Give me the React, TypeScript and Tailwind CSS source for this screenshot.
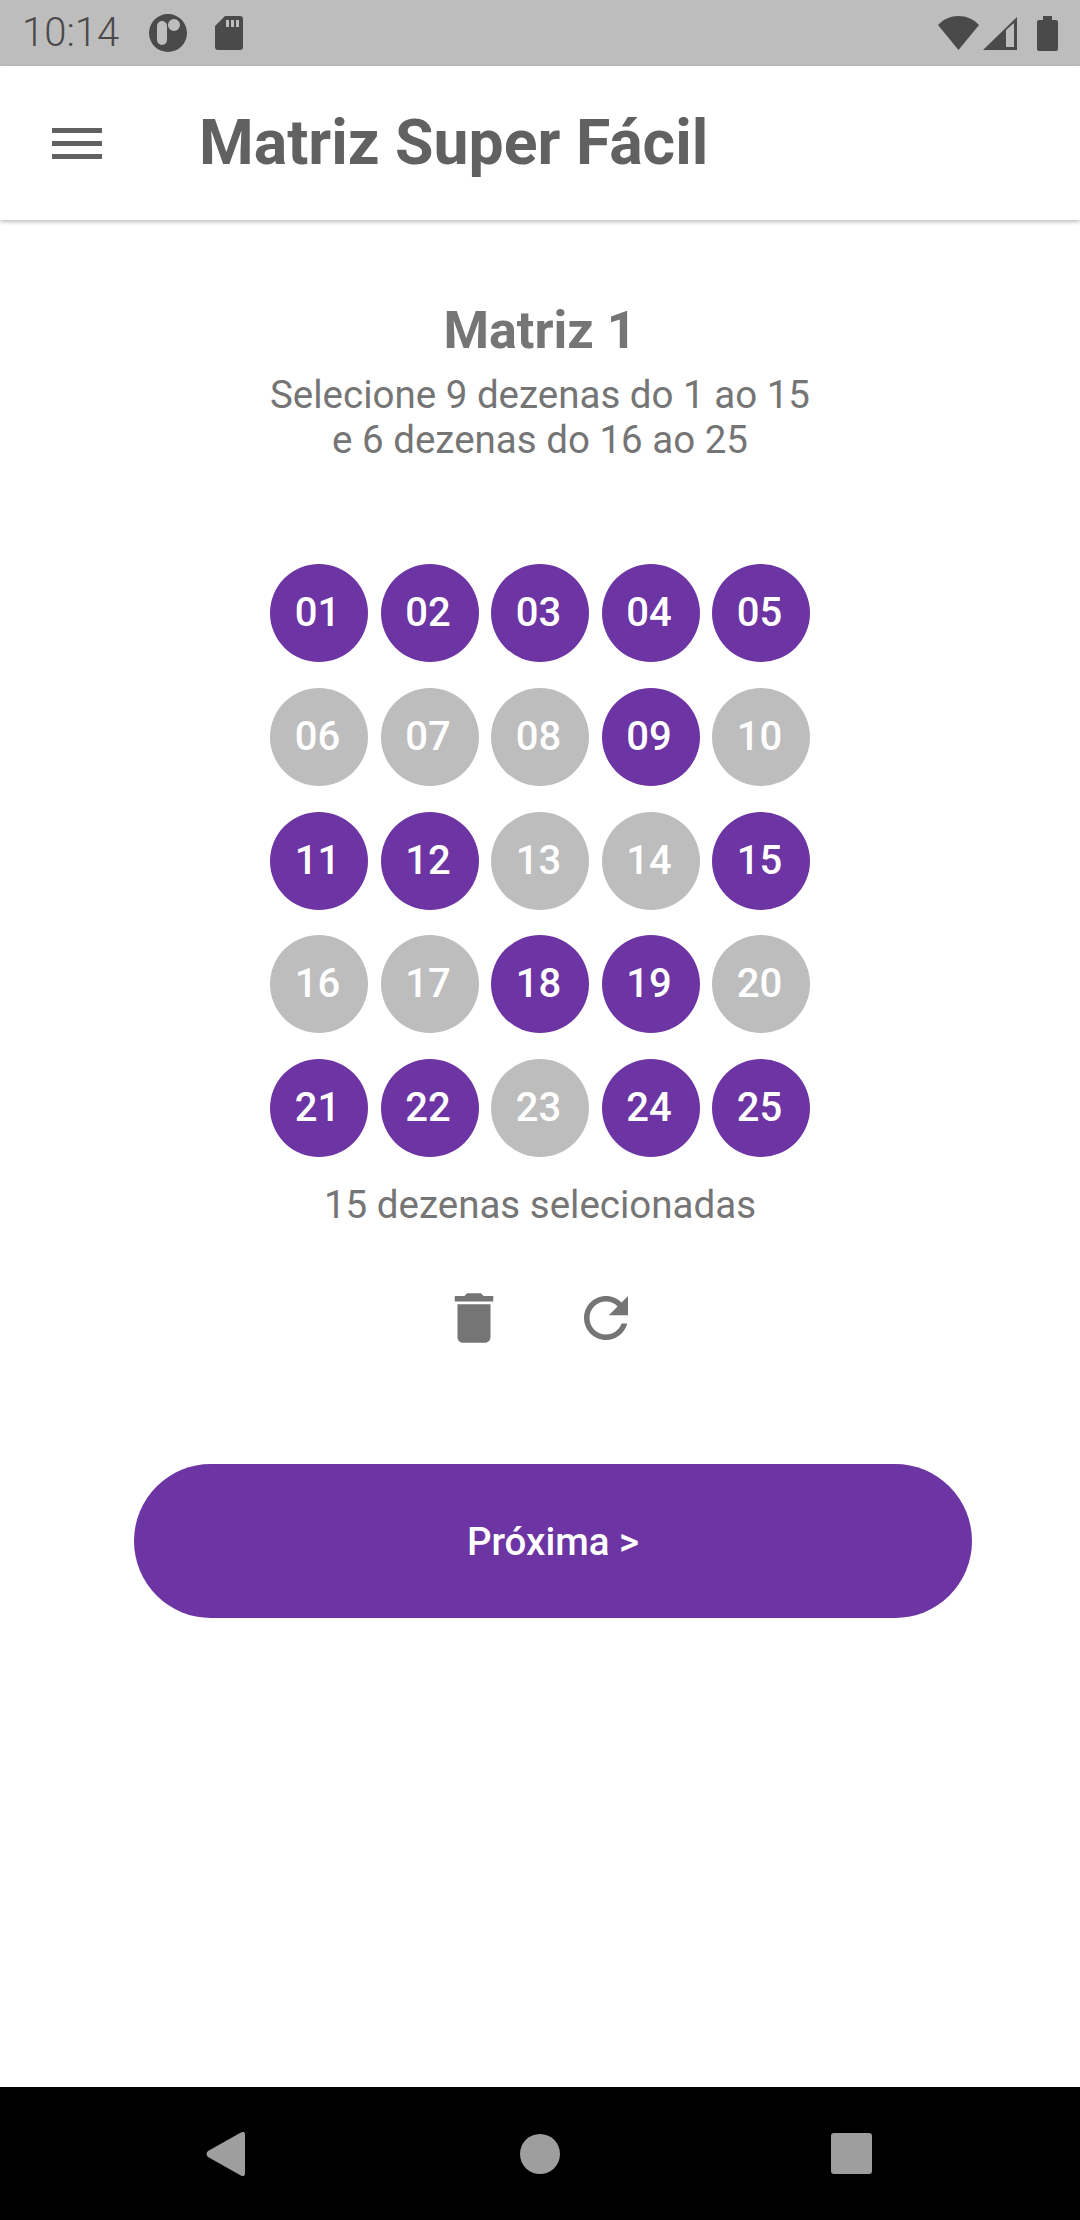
import React from "react";

const selected = [1, 2, 3, 4, 5, 9, 11, 12, 15, 18, 19, 21, 22, 24, 25];
const numbers = Array.from({ length: 25 }, (_, i) => i + 1);

const StatusBar = () => (
  <div className="h-[66px] shrink-0 bg-[#bdbdbd] flex items-center pl-[22px] pr-[22px] text-[#4a4a4a]">
    <span className="text-[40px] leading-none font-light w-[127px]">10:14</span>
    <svg viewBox="0 0 38 38" className="w-[38px] h-[38px] fill-[#4a4a4a]">
      <path d="M19 0a19 19 0 1 0 0 38a19 19 0 0 0 0-38zM13 7a5 5 0 0 1 5 5v14a5 5 0 0 1-10 0V12a5 5 0 0 1 5-5zM25 5a6 6 0 1 1 0 12a6 6 0 0 1 0-12z" fillRule="evenodd" />
    </svg>
    <svg viewBox="0 0 28 34" className="ml-[28px] w-[28px] h-[34px] fill-[#4a4a4a]">
      <path d="M10 0H25a3 3 0 0 1 3 3V31a3 3 0 0 1-3 3H3a3 3 0 0 1-3-3V10zM11 4v7h3V4zM16 4v7h3V4zM21 4v7h3V4z" fillRule="evenodd" />
    </svg>
    <div className="flex-1" />
    <svg viewBox="0 0 41 34" className="w-[41px] h-[34px] fill-[#4a4a4a]">
      <path d="M0 9C11-3 30-3 41 9L20.5 34z" />
    </svg>
    <svg viewBox="0 0 34 33" className="ml-[4px] w-[34px] h-[33px] fill-[#4a4a4a]">
      <path d="M0 33L34 0V33zM23 13V30H31V6z" fillRule="evenodd" />
    </svg>
    <svg viewBox="0 0 21 35" className="ml-[20px] w-[21px] h-[35px] fill-[#4a4a4a]">
      <path d="M6 0H15V4H19a2 2 0 0 1 2 2V33a2 2 0 0 1-2 2H2a2 2 0 0 1-2-2V6a2 2 0 0 1 2-2H6z" />
    </svg>
  </div>
);

const Header = () => (
  <header className="h-[154px] shrink-0 bg-white flex items-center pl-[52px] shadow-[0_2px_4px_rgba(0,0,0,0.25)] z-10">
    <div className="w-[50px] flex flex-col gap-[8px]">
      <div className="h-[5px] bg-[#616161]" />
      <div className="h-[5px] bg-[#616161]" />
      <div className="h-[5px] bg-[#616161]" />
    </div>
    <h1 className="ml-[97px] text-[62.5px] leading-none font-bold text-[#616161]">Matriz Super Fácil</h1>
  </header>
);

const NavBar = () => (
  <div className="h-[133px] shrink-0 bg-black relative flex items-center">
    <svg viewBox="0 0 39 44" className="ml-[206px] w-[39px] h-[44px] fill-[#9e9e9e]">
      <path d="M34 1Q39-2 39 3V41Q39 46 34 43L2 25Q-1 22 2 19z" />
    </svg>
    <div className="ml-[275px] w-[40px] h-[40px] rounded-full bg-[#9e9e9e]" />
    <div className="ml-[271px] w-[41px] h-[41px] rounded-[3px] bg-[#9e9e9e]" />
  </div>
);

export default function App() {
  return (
    <div className="w-[1080px] h-[2220px] flex flex-col bg-white font-['Roboto',sans-serif] overflow-hidden">
      <StatusBar />
      <Header />
      <main className="flex-1 flex flex-col items-center">
        <h2 className="mt-[81px] text-[52px] leading-[60px] font-bold text-[#757575]">Matriz 1</h2>
        <p className="mt-[11px] text-[38.5px] leading-[45px] text-[#757575] text-center">
          Selecione 9 dezenas do 1 ao 15
          <br />
          e 6 dezenas do 16 ao 25
        </p>
        <div className="mt-[102px] grid grid-cols-5 gap-x-[12.5px] gap-y-[25.75px]">
          {numbers.map((n) => (
            <div
              key={n}
              className={`w-[98px] h-[98px] pr-[3px] rounded-full flex items-center justify-center text-white text-[40px] font-medium ${
                selected.includes(n) ? "bg-[#6d34a3]" : "bg-[#bdbdbd]"
              }`}
            >
              {String(n).padStart(2, "0")}
            </div>
          ))}
        </div>
        <p className="mt-[26px] text-[38.5px] leading-[44px] text-[#757575]">15 dezenas selecionadas</p>
        <div className="mt-[58px] flex gap-[66px]">
          <svg viewBox="0 0 24 24" className="w-[66px] h-[66px] fill-[#757575]">
            <path d="M6 19c0 1.1.9 2 2 2h8c1.1 0 2-.9 2-2V7H6v12zM19 4h-3.5l-1-1h-5l-1 1H5v2h14V4z" />
          </svg>
          <svg viewBox="0 0 24 24" className="w-[66px] h-[66px] fill-[#757575]">
            <path d="M17.65 6.35C16.2 4.9 14.21 4 12 4c-4.42 0-7.99 3.58-7.99 8s3.57 8 7.99 8c3.73 0 6.84-2.55 7.73-6h-2.08c-.82 2.33-3.04 4-5.65 4-3.31 0-6-2.69-6-6s2.69-6 6-6c1.66 0 3.14.69 4.22 1.78L13 11h7V4l-2.35 2.35z" />
          </svg>
        </div>
        <div className="mt-[113px] w-full pl-[134px]">
          <button className="w-[838px] h-[154px] pt-[2px] rounded-full bg-[#6d34a3] text-white text-[38.5px] font-medium">
            Próxima &gt;
          </button>
        </div>
      </main>
      <NavBar />
    </div>
  );
}
